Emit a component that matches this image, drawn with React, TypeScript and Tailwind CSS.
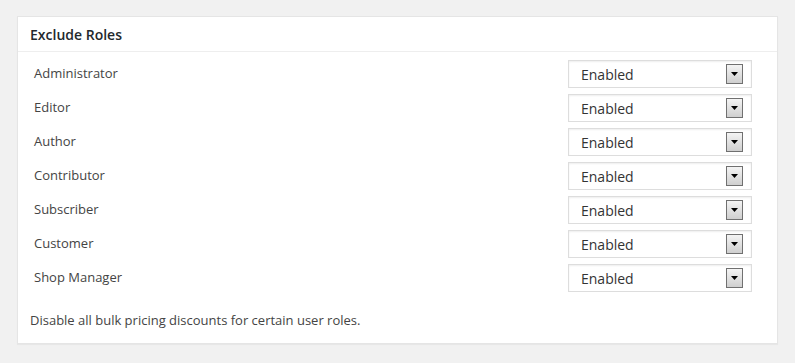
export default function App() {
  const roles = [
    "Administrator",
    "Editor",
    "Author",
    "Contributor",
    "Subscriber",
    "Customer",
    "Shop Manager",
  ];

  return (
    <div
      className="w-[795px] h-[363px] bg-[#f1f1f1] pt-4 pl-[17px] text-[#444]"
      style={{ fontFamily: '"Open Sans", "Noto Sans", sans-serif' }}
    >
      <div className="w-[761px] h-[328px] bg-white border border-[#e5e5e5] shadow-[0_1px_1px_rgba(0,0,0,0.04)]">
        <div className="h-[35px] border-b border-[#eeeeee] pl-3 flex items-center text-[14px] font-semibold text-[#23282d]">
          Exclude Roles
        </div>
        <div className="pt-[5px]">
          {roles.map((role) => (
            <div key={role} className="h-[34px] flex items-center justify-between pl-4 pr-[25px]">
              <div className="text-[13px] -mt-px">{role}</div>
              <div className="w-[184px] h-[28px] border border-[#dddddd] shadow-[inset_0_1px_2px_rgba(0,0,0,0.07)] flex items-center justify-between pl-3 pr-2 text-[14px] text-[#333]">
                <span>Enabled</span>
                <span className="w-[17px] h-[20px] border border-[#707070] bg-gradient-to-b from-[#f4f4f4] to-[#cfcfcf] flex items-center justify-center">
                  <svg width="8" height="5" viewBox="0 0 8 5">
                    <path d="M0 0 H7 L3.5 4 Z" fill="#000" />
                  </svg>
                </span>
              </div>
            </div>
          ))}
        </div>
        <div className="pl-3 pt-[16px] text-[13px]">
          Disable all bulk pricing discounts for certain user roles.
        </div>
      </div>
    </div>
  );
}
